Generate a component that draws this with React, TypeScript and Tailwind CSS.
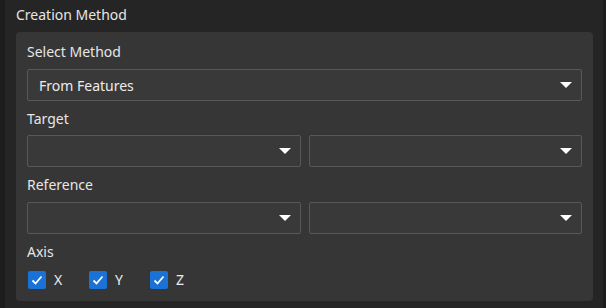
import React from 'react';

const font = "font-['Segoe_UI','Noto_Sans',sans-serif]";

const Arrow = () => (
    <svg width="12" height="6" viewBox="0 0 12 6" className="shrink-0">
        <path d="M0 0 H12 L6 6 Z" fill="#ffffff" />
    </svg>
);

const Combo: React.FC<{ value?: string; className?: string }> = ({ value, className }) => (
    <div className={`h-[32px] flex items-center justify-between pl-[11px] pr-[9px] bg-[#393939] border border-[#585858] rounded-[2px] ${className ?? ''}`}>
        <span className="text-[14px] text-[#ececec]">{value}</span>
        <Arrow />
    </div>
);

const Check: React.FC<{ label: string }> = ({ label }) => (
    <div className="flex items-center gap-[8px] w-[61px]">
        <div className="w-[18px] h-[18px] rounded-[2px] bg-[#1b72d6] flex items-center justify-center">
            <svg width="14" height="14" viewBox="0 0 14 14">
                <path d="M2.5 7.5 L5.5 10.5 L11.5 3.5" stroke="#ffffff" strokeWidth="1.8" fill="none" />
            </svg>
        </div>
        <span className="text-[14px] text-[#ececec]">{label}</span>
    </div>
);

export default function App() {
    return (
        <div className={`w-[606px] h-[308px] flex bg-[#252525] ${font}`}>
            <div className="w-[5px] bg-[#1d1d1d]" />
            <div className="flex-1 flex flex-col">
                <div className="ml-[11px] mt-[5px] h-[20px] leading-[20px] text-[14px] text-[#e6e6e6]">Creation Method</div>
                <div className="ml-[11px] mr-[10px] mt-[7px] bg-[#363636] rounded-[4px] px-[11px] pt-[10px] pb-[11px] flex flex-col">
                    <div className="h-[20px] leading-[20px] text-[14px] text-[#e6e6e6]">Select Method</div>
                    <Combo value="From Features" className="mt-[7px]" />
                    <div className="mt-[8px] h-[20px] leading-[20px] text-[14px] text-[#e6e6e6]">Target</div>
                    <div className="mt-[6px] flex gap-[8px]">
                        <Combo className="flex-1" />
                        <Combo className="flex-1" />
                    </div>
                    <div className="mt-[8px] h-[20px] leading-[20px] text-[14px] text-[#e6e6e6]">Reference</div>
                    <div className="mt-[7px] flex gap-[8px]">
                        <Combo className="flex-1" />
                        <Combo className="flex-1" />
                    </div>
                    <div className="mt-[8px] h-[20px] leading-[20px] text-[14px] text-[#e6e6e6]">Axis</div>
                    <div className="mt-[7px] pl-[1px] flex">
                        <Check label="X" />
                        <Check label="Y" />
                        <Check label="Z" />
                    </div>
                </div>
            </div>
            <div className="w-[3px] bg-[#1d1d1d]" />
        </div>
    );
}
